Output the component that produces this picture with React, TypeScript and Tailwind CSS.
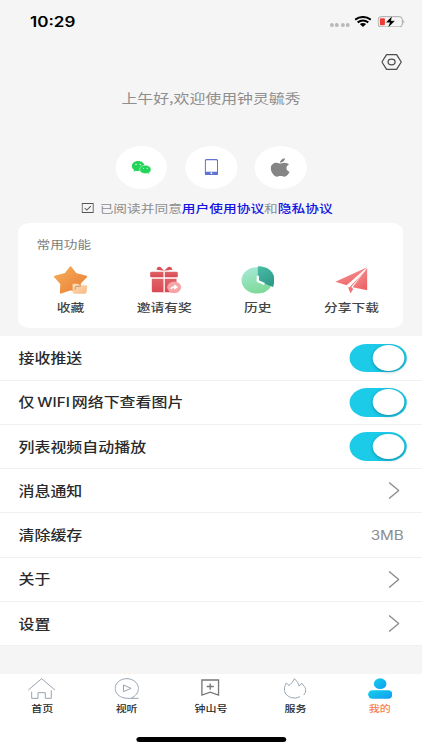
import React, {useState} from 'react';
import { FaApple } from 'react-icons/fa';

interface ToggleProps {
  on: boolean;
  onChange: () => void;
}

const Toggle: React.FC<ToggleProps> = ({on, onChange}) => (
  <button
    type="button"
    onClick={onChange}
    className={
      on
        ? 'flex h-[28.6px] w-[46.7px] items-center justify-end rounded-full bg-[#1bcbe8] p-[1.6px]'
        : 'flex h-[28.6px] w-[46.7px] items-center justify-start rounded-full bg-gray-300 p-[1.6px]'
    }
  >
    <span className="h-[25.6px] w-[25.6px] rounded-full bg-white shadow-[0_1px_3px_rgba(0,60,90,0.45)]" />
  </button>
);

const Chevron = () => (
  <svg viewBox="0 0 11 17" preserveAspectRatio="none" className="mr-[5.8px] h-[17px] w-[9px]" fill="none" stroke="#8e8e8e" strokeWidth="1.4">
    <path d="M0.5 0.5L10.2 8.5L0.5 16.5" />
  </svg>
);

const StatusBar = () => (
  <div className="flex h-[44px] items-start justify-between pl-[24.6px] pr-[13.8px]">
    <span className="mt-[11.5px] font-['Inter'] text-[14px] font-semibold leading-[20px] text-black">10:29</span>
    <div className="mt-[16px] flex h-[11px] items-center">
      <div className="mr-[4.5px] mt-[7px] flex gap-[1.4px]">
        <i className="h-[3.2px] w-[2.9px] rounded-full bg-[#bababa]" />
        <i className="h-[3.2px] w-[2.9px] rounded-full bg-[#bababa]" />
        <i className="h-[3.2px] w-[2.9px] rounded-full bg-[#bababa]" />
        <i className="h-[3.2px] w-[2.9px] rounded-full bg-[#bababa]" />
      </div>
      <svg viewBox="434 47 51 33" preserveAspectRatio="none" className="mr-[4.6px] h-[11px] w-[14px]" fill="none" stroke="#000" strokeWidth="6">
        <path d="M436 58Q459.500 42 483 58" />
        <path d="M443.500 66Q459.500 55 475.500 66" />
        <path d="M450 71Q459.500 65 469 71L459.500 80Z" fill="#000" stroke="none" />
      </svg>
      <svg viewBox="501 47 83 34" preserveAspectRatio="none" className="h-[11.3px] w-[22.7px]">
        <rect x="502.500" y="49" width="73" height="31" rx="9" fill="none" stroke="#8c8c8c" strokeWidth="2.200" />
        <path d="M579 59Q584 64.500 579 70Z" fill="#8c8c8c" />
        <rect x="508" y="54" width="15" height="21" rx="3" fill="#f03a34" />
        <path d="M545 46L525 67H537L532 83L554 61H542Z" fill="#000" stroke="#f5f5f5" strokeWidth="1.500" />
      </svg>
    </div>
  </div>
);

const WechatIcon = () => (
  <svg viewBox="185 62 60 40" preserveAspectRatio="none" className="h-[13.3px] w-[16.4px]">
    <path d="M205 62C194 62 186 68.500 186 77C186 82 188.500 86 193 89L191 94L198 91C203 92.500 210 92 214 90C224 86 226 79 223 72C220 65.500 213 62 205 62Z" fill="#22d45a" />
    <path d="M226.500 75C217 75 209.500 80 209.500 87.500C209.500 95 217 100 226.500 100C229 100 231 99.700 233 99L239 102L237.500 97C241.500 95 243.500 91.500 243.500 87.500C243.500 80 236 75 226.500 75Z" fill="#22d45a" stroke="#fff" strokeWidth="1.500" />
    <circle cx="198.500" cy="72.500" r="2" fill="#fff" />
    <circle cx="211" cy="72.500" r="2" fill="#fff" />
    <circle cx="221" cy="84" r="1.700" fill="#fff" />
    <circle cx="232" cy="84" r="1.700" fill="#fff" />
  </svg>
);

const PhoneIcon = () => (
  <svg viewBox="14 57 41 49" preserveAspectRatio="none" className="h-[16.3px] w-[11.200px]">
    <rect x="16" y="59" width="37" height="45" rx="4" fill="#fff" stroke="#5f73d0" strokeWidth="3.600" />
    <path d="M15 95H54V101Q54 105.500 49 105.500H20Q15 105.500 15 101Z" fill="#5f73d0" />
    <circle cx="34.500" cy="99.500" r="2.700" fill="#fff" />
  </svg>
);

const StarIcon = () => (
  <svg viewBox="131 136 104 84" preserveAspectRatio="none" className="h-[28px] w-[28.400px]">
    <defs>
      <linearGradient id="star" x1="0" y1="0" x2="1" y2="1">
        <stop offset="0" stopColor="#f6ae5c" />
        <stop offset="1" stopColor="#e97d33" />
      </linearGradient>
      <linearGradient id="folder" x1="0" y1="0" x2="1" y2="1">
        <stop offset="0" stopColor="#fde0bd" />
        <stop offset="1" stopColor="#f9b780" />
      </linearGradient>
    </defs>
    <path d="M182 140L198 160L229 168L210 187L211 215L182 206L153 216L154 189L135 168L166 160Z" fill="url(#star)" stroke="url(#star)" strokeWidth="6" strokeLinejoin="round" />
    <path d="M191 189H205L210 194H229Q233 194 232 198L230 215Q229 219 225 219H193Q188 219 188 215V192Q188 189 191 189Z" fill="url(#folder)" />
    <path d="M196 207V201Q196 197 201 197H213" fill="none" stroke="#a9703f" strokeWidth="2" />
  </svg>
);

const GiftIcon = () => (
  <svg viewBox="420 138 96 83" preserveAspectRatio="none" className="relative left-[1.3px] h-[27.700px] w-[26.300px]">
    <defs>
      <linearGradient id="gift" x1="0" y1="0" x2="0" y2="1">
        <stop offset="0" stopColor="#e0636a" />
        <stop offset="1" stopColor="#d94952" />
      </linearGradient>
    </defs>
    <path d="M463 152L440 149Q442 137 452 141ZM463 152L488 149Q485 137 475 141Z" fill="#da515a" />
    <rect x="421" y="155" width="83" height="17" rx="4" fill="url(#gift)" />
    <path d="M426 176H500V213Q500 217 496 217H430Q426 217 426 213Z" fill="url(#gift)" />
    <path d="M463 155V217" stroke="#fff" strokeWidth="4" />
    <ellipse cx="493" cy="202" rx="21" ry="17.500" fill="#f8a3a5" />
    <path d="M482 209Q482 199 493 199V193L505 202L493 209V204Q487 204 482 209Z" fill="#fff" />
  </svg>
);

const HistoryIcon = () => (
  <svg viewBox="92 136 101 83" preserveAspectRatio="none" className="h-[27.700px] w-[27.600px]">
    <defs>
      <linearGradient id="clock" x1="0" y1="0" x2="0.3" y2="1">
        <stop offset="0" stopColor="#a9e9da" />
        <stop offset="1" stopColor="#7fdb9b" />
      </linearGradient>
      <linearGradient id="slice" x1="0" y1="0" x2="0.5" y2="1">
        <stop offset="0" stopColor="#49bda6" />
        <stop offset="1" stopColor="#2f9c8b" />
      </linearGradient>
    </defs>
    <ellipse cx="140" cy="179" rx="47" ry="39.500" fill="url(#clock)" />
    <path d="M142 137C174 137 192 156 192 176Q192 188 188 199L142 181Z" fill="url(#slice)" />
    <path d="M142 165V181L162 190" fill="none" stroke="#fff" strokeWidth="7" />
  </svg>
);

const ShareIcon = () => (
  <svg viewBox="373 139 99 80" preserveAspectRatio="none" className="h-[26.700px] w-[27px]">
    <defs>
      <linearGradient id="plane" x1="0" y1="0" x2="0.6" y2="1">
        <stop offset="0" stopColor="#f7a0a0" />
        <stop offset="1" stopColor="#ec6468" />
      </linearGradient>
    </defs>
    <path d="M470 140L374 183L408 194Z" fill="url(#plane)" />
    <path d="M470 142V209L426 200Z" fill="url(#plane)" />
    <path d="M468 145L411 197L420 218L428 205L422 199Z" fill="#ee7477" />
    <path d="M467 145L410 196L415 201L463 152Z" fill="#fff" />
  </svg>
);

const shortcuts = [
  {label: '收藏', icon: <StarIcon />},
  {label: '邀请有奖', icon: <GiftIcon />},
  {label: '历史', icon: <HistoryIcon />},
  {label: '分享下载', icon: <ShareIcon />},
];

const tabs = [
  {
    label: '首页',
    icon: (
      <svg viewBox="85 38 82 63" preserveAspectRatio="none" className="h-[21px] w-[22.400px]" fill="none" stroke="#8d9dab" strokeWidth="2.800">
        <path d="M86 74L126 40L166 74" />
        <path d="M96 79V99H115V82H137V99H155V75" />
      </svg>
    ),
  },
  {
    label: '视听',
    icon: (
      <svg viewBox="343 38 74 63" preserveAspectRatio="none" className="h-[21px] w-[20.200px]" fill="none" stroke="#8d9dab" strokeWidth="2.800">
        <path d="M416 99H383C361 99 345 86 345 69C345 53 361 40 380 40C399 40 415 53 415 69C415 82 406 93 395 97" />
        <path d="M370 59V79L393 69Z" />
      </svg>
    ),
  },
  {
    label: '钟山号',
    icon: (
      <svg viewBox="0 0 20 18" preserveAspectRatio="none" className="mt-[1px] h-[17.500px] w-[15.600px]" fill="none" stroke="#777" strokeWidth="1.400">
        <path d="M1 1H18.500V16.500L9.700 13.500L1 16.500Z" />
        <path d="M6 7.700H13.500M9.700 4.500V11" />
      </svg>
    ),
  },
  {
    label: '服务',
    icon: (
      <svg viewBox="218 38 69 63" preserveAspectRatio="none" className="h-[21px] w-[18.800px]" fill="none" stroke="#8d9dab" strokeWidth="2.700">
        <path d="M267 94Q254 101 241 97C226 92 219 82 220 71C220 65 223 58 225 53Q230 55 233 61C241 55 245 50 250 40C257 47 263 54 264 62L273 54C275 62 284 62 284 73Q285 82 278 89" />
      </svg>
    ),
  },
  {
    label: '我的',
    icon: (
      <svg viewBox="469 38 75 63" preserveAspectRatio="none" className="h-[21px] w-[20.500px]">
        <defs>
          <linearGradient id="me" x1="0" y1="0" x2="1" y2="1">
            <stop offset="0" stopColor="#12d0ec" />
            <stop offset="1" stopColor="#139cf0" />
          </linearGradient>
        </defs>
        <ellipse cx="506" cy="55" rx="19" ry="16" fill="url(#me)" />
        <rect x="470" y="75" width="73" height="25" rx="12.500" fill="url(#me)" />
      </svg>
    ),
  },
];

const App: React.FC = () => {
  const [push, setPush] = useState(true);
  const [wifiOnly, setWifiOnly] = useState(true);
  const [autoPlay, setAutoPlay] = useState(true);

  const rows = [
    {label: '接收推送', right: <Toggle on={push} onChange={() => setPush(!push)} />},
    {
      label: <>仅<span className="ml-[2.300px] mr-[1.600px] font-['Inter'] text-[12.5px] font-medium leading-[16px]">WIFI</span>网络下查看图片</>,
      right: <Toggle on={wifiOnly} onChange={() => setWifiOnly(!wifiOnly)} />,
    },
    {label: '列表视频自动播放', right: <Toggle on={autoPlay} onChange={() => setAutoPlay(!autoPlay)} />},
    {label: '消息通知', right: <Chevron />},
    {label: '清除缓存', right: <span className="mr-[2px] pt-[2px] font-['Inter'] text-[12.500px] text-[#8c8c8c]">3MB</span>},
    {label: '关于', right: <Chevron />},
    {label: '设置', right: <Chevron />},
  ];

  return (
    <div className="h-[750px] w-[422px] overflow-hidden bg-[#f5f5f5]">
      {/* the whole screen is drawn at phone width and stretched sideways */}
      <div className="flex h-[750px] w-[346.500px] origin-top-left scale-x-[1.218] flex-col font-['Noto_Sans_CJK_SC',sans-serif]">
        <StatusBar />

        <div className="flex h-[36px] items-start justify-end pr-[16.600px] pt-[10px]">
          <svg viewBox="512 161 62 48" preserveAspectRatio="none" className="h-[16px] w-[17px]" fill="none" stroke="#4d4d4d" strokeWidth="3.800">
            <path d="M528 163H558L572 185L558 207H528L514 185Z" strokeLinejoin="round" />
            <ellipse cx="543" cy="185" rx="10.500" ry="8.500" />
          </svg>
        </div>

        <p className="mt-[8px] h-[20px] whitespace-nowrap text-center text-[13.050px] leading-[20px] text-[#8e8e8e]">上午好,欢迎使用钟灵毓秀</p>

        <div className="mt-[38px] flex justify-center gap-[14.700px]">
          <button type="button" className="flex h-[42.500px] w-[42.500px] items-center justify-center rounded-full bg-white">
            <WechatIcon />
          </button>
          <button type="button" className="flex h-[42.500px] w-[42.500px] items-center justify-center rounded-full bg-white">
            <PhoneIcon />
          </button>
          <button type="button" className="flex h-[42.500px] w-[42.500px] items-center justify-center rounded-full bg-white">
            <FaApple className="h-[21px] w-[16px] text-[#858585]" />
          </button>
        </div>

        <div className="mt-[9.900px] flex h-[20px] items-center whitespace-nowrap pl-[66.800px] text-[11.250px] leading-[20px] text-[#8e8e8e]">
          <svg viewBox="0 0 12 10" preserveAspectRatio="none" className="mr-[5px] h-[10px] w-[10px]" fill="none" stroke="#555" strokeWidth="1">
            <rect x="0.500" y="0.500" width="11" height="9" />
            <path d="M3 5L5.200 7L9 3.200" />
          </svg>
          已阅读并同意
          <a className="font-medium text-[#1414e0]">用户使用协议</a>
          和
          <a className="font-medium text-[#1414e0]">隐私协议</a>
        </div>

        <section className="mx-[15.200px] mt-[4.200px] h-[105.700px] rounded-[9px] bg-white px-[4.300px]">
          <h2 className="pl-[10.500px] pt-[11.500px] text-[11.200px] leading-[20px] text-[#7d7d7d]">常用功能</h2>
          <div className="mt-[12px] grid grid-cols-4">
            {shortcuts.map((item) => (
              <div key={item.label} className="flex flex-col items-center">
                <div className="flex h-[28px] items-center">{item.icon}</div>
                <span className="mt-[2.800px] whitespace-nowrap text-[11.300px] font-medium leading-[20px] text-[#444]">{item.label}</span>
              </div>
            ))}
          </div>
        </section>

        <ul className="mt-[8px] bg-white">
          {rows.map((row, i) => (
            <li key={i} className="flex h-[44.300px] items-center justify-between border-b border-[#f0f0f0] pl-[15.200px] pr-[13px]">
              <span className="whitespace-nowrap text-[13.100px] font-medium leading-[20px] text-[#2a2a2a]">{row.label}</span>
              {row.right}
            </li>
          ))}
        </ul>

        <nav className="mt-auto h-[76.500px] bg-white">
          <div className="grid grid-cols-5">
            {tabs.map((tab) => (
              <div key={tab.label} className="flex flex-col items-center pt-[4.200px]">
                <div className="flex h-[21px] items-start">{tab.icon}</div>
                <span className={tab.label === '我的' ? 'mt-[3.500px] text-[9px] font-medium leading-[14px] text-[#f8804f]' : 'mt-[3.500px] text-[9px] font-medium leading-[14px] text-[#2a2a2a]'}>
                  {tab.label}
                </span>
              </div>
            ))}
          </div>
          <div className="mx-auto mt-[21px] h-[5px] w-[123px] rounded-full bg-black" />
        </nav>
      </div>
    </div>
  );
};

export default App;
